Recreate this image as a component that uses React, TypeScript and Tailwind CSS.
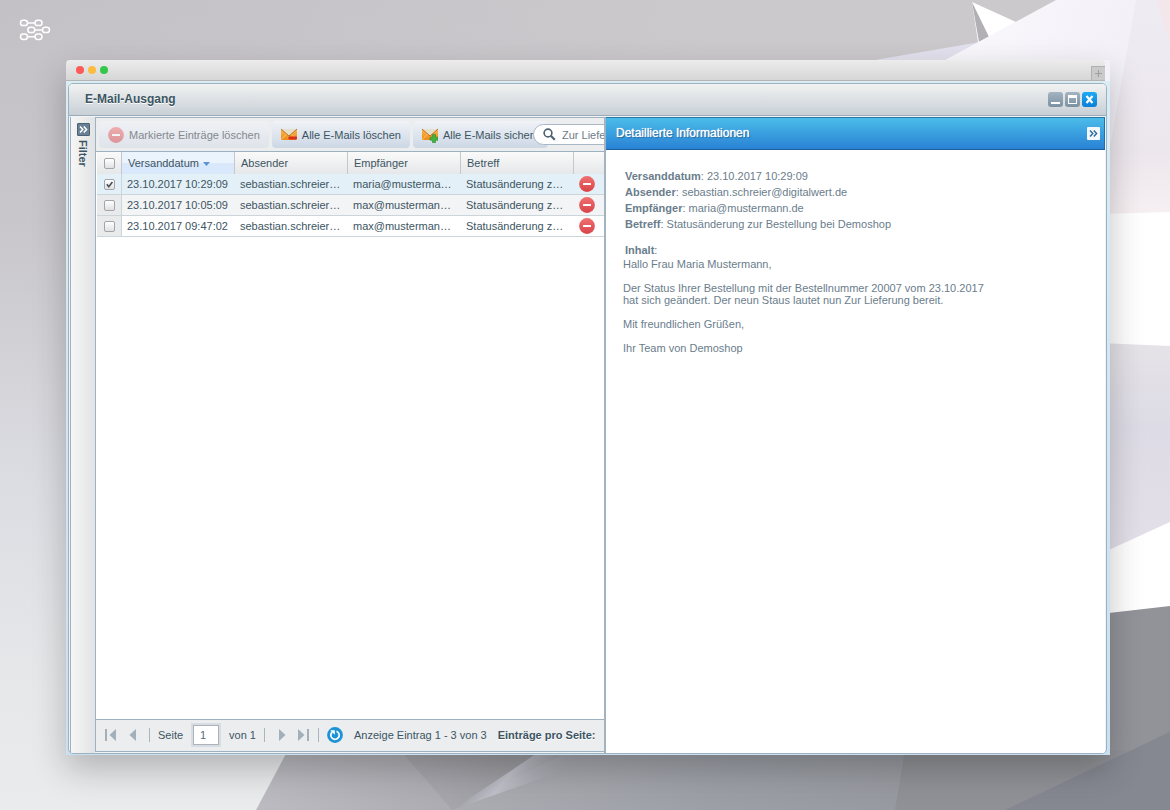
import React, { useState } from 'react';
import { clsx } from 'clsx';

interface Mail {
  id: number;
  date: string;
  sender: string;
  recipient: string;
  subject: string;
}

const MAILS: Mail[] = [
  { id: 1, date: '23.10.2017 10:29:09', sender: 'sebastian.schreier@digitalwert.de', recipient: 'maria@mustermann.de', subject: 'Statusänderung zur Bestellung bei Demoshop' },
  { id: 2, date: '23.10.2017 10:05:09', sender: 'sebastian.schreier@digitalwert.de', recipient: 'max@mustermann.de', subject: 'Statusänderung zur Bestellung bei Demoshop' },
  { id: 3, date: '23.10.2017 09:47:02', sender: 'sebastian.schreier@digitalwert.de', recipient: 'max@mustermann.de', subject: 'Statusänderung zur Bestellung bei Demoshop' },
];

// --- Icons ---
const Logo = () => (
  <svg width="32" height="22" viewBox="0 0 32 22" fill="none" stroke="#fff" strokeWidth="1.5">
    <rect x="1.5" y="1.2" width="7" height="5.4" rx="2.7" />
    <rect x="16" y="1.2" width="7" height="5.4" rx="2.7" />
    <rect x="8.8" y="8.2" width="7" height="5.4" rx="2.7" />
    <rect x="23.5" y="8.2" width="7" height="5.4" rx="2.7" />
    <rect x="1.5" y="15" width="7" height="5.4" rx="2.7" />
    <rect x="16" y="15" width="7" height="5.4" rx="2.7" />
    <path d="M8.5 4H16M15.8 11h7.7M8.5 17.7H16" />
  </svg>
);

const RemoveIcon = ({ faded = false }: { faded?: boolean }) => (
  <svg width="16" height="16" viewBox="0 0 16 16" opacity={faded ? 0.5 : 1}>
    <defs>
      <linearGradient id="removeFill" x1="0" y1="0" x2="0" y2="1">
        <stop offset="0" stopColor="#f07070" />
        <stop offset="1" stopColor="#d84348" />
      </linearGradient>
    </defs>
    <circle cx="8" cy="8" r="7.9" fill="url(#removeFill)" />
    <rect x="4" y="7" width="8" height="2" rx="0.5" fill="#fff" />
  </svg>
);

const EnvelopeIcon = ({ plus = false }: { plus?: boolean }) => (
  <svg width="16" height="16" viewBox="0 0 16 16">
    <defs>
      <linearGradient id="envelopeFill" x1="0" y1="0" x2="0" y2="1">
        <stop offset="0" stopColor="#f9b94c" />
        <stop offset="1" stopColor="#ef8a18" />
      </linearGradient>
    </defs>
    <rect x="0" y="2" width="16" height="11" fill="url(#envelopeFill)" />
    <path d="M0 2h16L8 9z" fill="#e6dfcc" />
    <path d="M0 2l8 7 8-7" fill="none" stroke="#b8661a" strokeWidth="0.9" />
    <path d="M0 13l5.5-6M16 13l-5.5-6" stroke="#fbcb78" strokeWidth="0.8" />
    {plus ? (
      <path d="M10.5 7.500h3v2.700H16v3h-2.500v2.500h-3v-2.500H8v-3h2.500z" fill="#43b13f" stroke="#2a8c2c" strokeWidth="0.600" />
    ) : (
      <rect x="7.500" y="9.500" width="8.500" height="3" rx="0.800" fill="#d6301f" />
    )}
  </svg>
);

const SearchIcon = () => (
  <svg width="13" height="13" viewBox="0 0 13 13" fill="none" stroke="#4f6373" className="shrink-0">
    <circle cx="5" cy="5" r="3.9" strokeWidth="1.6" />
    <path d="M7.8 7.8l4 4" strokeWidth="2.2" />
  </svg>
);

const Chevrons = () => (
  <svg width="9" height="9" viewBox="0 0 9 9" fill="none" stroke="currentColor" strokeWidth="1.5">
    <path d="M1 1.5l2.800 3L1 7.500M4.800 1.500l2.800 3-2.800 3" />
  </svg>
);

const RefreshIcon = () => (
  <svg width="16" height="16" viewBox="0 0 16 16">
    <circle cx="8" cy="8" r="7.9" fill="#1b93d6" />
    <path d="M9.5 4.200a4.200 4.200 0 1 1-4.300.8" fill="none" stroke="#fff" strokeWidth="1.700" />
    <path d="M3.200 3.300h4.600v4.400z" fill="#fff" />
  </svg>
);

const PageArrow = ({ end = false, flip = false }: { end?: boolean; flip?: boolean }) => (
  <svg width="12" height="12" viewBox="0 0 12 12" fill="#a3b0ba" className={clsx(flip && 'rotate-180')}>
    {end ? <path d="M0 0l6.500 6L0 12zM9 0h2v12H9z" /> : <path d="M3 0l6.500 6L3 12z" />}
  </svg>
);

const Wallpaper = () => (
  <svg className="absolute inset-0 h-full w-full" viewBox="0 0 1170 810" preserveAspectRatio="none" aria-hidden="true">
    <defs>
      <linearGradient id="wallLeft" x1="0" y1="0" x2="0" y2="1">
        <stop offset="0" stopColor="#c3c1c6" />
        <stop offset="0.270" stopColor="#c8c6cb" />
        <stop offset="0.600" stopColor="#dcdde2" />
        <stop offset="0.850" stopColor="#e7e8ea" />
        <stop offset="1" stopColor="#eaebed" />
      </linearGradient>
      <linearGradient id="wallTop" x1="0" y1="0" x2="1" y2="0">
        <stop offset="0" stopColor="#cbc9cc" stopOpacity="0" />
        <stop offset="0.600" stopColor="#cbc9cc" />
      </linearGradient>
      <linearGradient id="wallWhite" x1="0" y1="0" x2="1" y2="1">
        <stop offset="0" stopColor="#fcfbfe" />
        <stop offset="1" stopColor="#e8e5f0" />
      </linearGradient>
      <linearGradient id="wallPink" x1="0" y1="0" x2="0" y2="1">
        <stop offset="0" stopColor="#eeebf2" />
        <stop offset="0.650" stopColor="#ece7ed" />
        <stop offset="1" stopColor="#f9f2f4" />
      </linearGradient>
      <linearGradient id="wallLilac" x1="0" y1="0" x2="0" y2="1">
        <stop offset="0" stopColor="#e6e3e8" />
        <stop offset="0.400" stopColor="#dddbe5" />
        <stop offset="1" stopColor="#e4e0ea" />
      </linearGradient>
      <linearGradient id="wallGrey" gradientUnits="userSpaceOnUse" x1="256" y1="0" x2="1170" y2="0">
        <stop offset="0" stopColor="#bbbbc1" />
        <stop offset="0.180" stopColor="#aeaeb4" />
        <stop offset="0.500" stopColor="#9c9fa6" />
        <stop offset="0.930" stopColor="#929499" />
        <stop offset="1" stopColor="#919399" />
      </linearGradient>
      <linearGradient id="wallFold" gradientUnits="userSpaceOnUse" x1="430" y1="790" x2="500" y2="745">
        <stop offset="0" stopColor="#a6a6ac" />
        <stop offset="1" stopColor="#9b9ba0" />
      </linearGradient>
      <linearGradient id="wallRay" gradientUnits="userSpaceOnUse" x1="490" y1="765" x2="545" y2="810">
        <stop offset="0" stopColor="#a2a2a8" />
        <stop offset="0.300" stopColor="#c0c0ca" />
        <stop offset="1" stopColor="#9fa1a8" stopOpacity="0" />
      </linearGradient>
    </defs>
    <rect width="1170" height="810" fill="url(#wallLeft)" />
    <rect width="1170" height="70" fill="url(#wallTop)" />
    <path d="M875 60L980 42 1000 80H860z" fill="#e3e1ed" />
    <path d="M972 2l44 20-28 20h-10z" fill="#fff" />
    <path d="M972 2l17 35-10 5z" fill="#b2afb5" />
    <path d="M1056 0h114v810H1100V90H890z" fill="url(#wallWhite)" />
    <path d="M1136 0h34v230h-75z" fill="url(#wallPink)" />
    <path d="M1157 0h13v45z" fill="#f3e7eb" />
    <path d="M1100 214l70-2v420h-70z" fill="#fff" />
    <path d="M1100 343l70 3v176l-70 32z" fill="url(#wallLilac)" />
    <path d="M1100 614l70-8v204H256l32-60h812z" fill="url(#wallGrey)" />
    <path d="M400 750l52 60 120-60z" fill="url(#wallFold)" />
    <path d="M452 810l90-60h80z" fill="url(#wallRay)" />
    <path d="M905 750h230l35-20v80H895z" fill="#909196" />
    <path d="M1005 810l165-78v78z" fill="#858891" />
  </svg>
);

const Checkbox = (props: React.InputHTMLAttributes<HTMLInputElement>) => (
  <span className="relative mx-auto block h-[11px] w-[11px]">
    <input
      type="checkbox"
      className="block h-[11px] w-[11px] appearance-none rounded-[2px] border border-[#a2a6aa] bg-linear-to-b from-white to-[#dfe1e3]"
      {...props}
    />
    {props.checked && (
      <svg className="pointer-events-none absolute inset-0" width="11" height="11" viewBox="0 0 11 11" fill="none" stroke="#4a4f54" strokeWidth="1.6">
        <path d="M2.800 5.200l2 2.500 3.600-4.700" />
      </svg>
    )}
  </span>
);

const ToolbarButton = ({ icon, children, disabled }: { icon: React.ReactNode; children: React.ReactNode; disabled?: boolean }) => (
  <button
    type="button"
    disabled={disabled}
    className={clsx(
      'flex h-[27px] shrink-0 items-center gap-[5px] rounded-[4px] px-[9px]',
      disabled
        ? 'bg-linear-to-b from-[#eff1f4] to-[#dfe4eb] text-[#84898f]'
        : 'bg-linear-to-b from-[#f0f3f7] to-[#ccd7e5]',
    )}
  >
    {icon}
    {children}
  </button>
);

const Separator = () => <span className="h-[14px] w-px shrink-0 bg-[#a9b4bd]" />;

const thClass = 'h-[22px] truncate border-r border-[#c3c8cc] pl-[6px] text-left font-normal';

export default function App() {
  const [selected, setSelected] = useState<number[]>([1]);
  const [search, setSearch] = useState('Zur Lieferung');
  const [page, setPage] = useState('1');

  const toggle = (id: number) =>
    setSelected(prev => (prev.includes(id) ? prev.filter(x => x !== id) : [...prev, id]));

  const toggleAll = () => setSelected(selected.length === MAILS.length ? [] : MAILS.map(m => m.id));

  const mail = MAILS[0];

  return (
    <div className="relative flex min-h-screen flex-col overflow-hidden font-['Liberation_Sans',Arial,sans-serif] text-[11px] leading-[14px] text-[#3c5562]">
      <Wallpaper />

      <header className="relative flex h-[60px] items-center px-[19px]">
        <Logo />
      </header>

      <main className="relative mr-[60px] mb-[55px] ml-[66px] flex grow flex-col shadow-[0_14px_32px_rgba(0,0,0,0.24)]">
        {/* Browser bar */}
        <div className="mr-[5px] flex h-[21px] items-center gap-[4px] rounded-t-[4px] border-b border-[#b5b5b5] bg-linear-to-b from-[#ececec] to-[#d6d6d6] pl-[10px]">
          <span className="h-2 w-2 rounded-full bg-[#fc5b57]" />
          <span className="h-2 w-2 rounded-full bg-[#fdbc40]" />
          <span className="h-2 w-2 rounded-full bg-[#34c84a]" />
          <button type="button" aria-label="Neuer Tab" className="ml-auto flex h-[14px] w-[14px] items-center justify-center self-end border-t border-l border-[#b0b0b0] bg-[#cacaca]">
            <svg width="7" height="7" viewBox="0 0 7 7" stroke="#a0a0a0" strokeWidth="1.200">
              <path d="M3.500 0v7M0 3.500h7" />
            </svg>
          </button>
        </div>

        {/* Application window */}
        <div className="flex grow flex-col bg-linear-to-b from-[#daedf4] to-[#c9e0f1] pt-[2px] pr-[3px] pb-px pl-[2px]">
          <div className="flex grow flex-col overflow-hidden rounded-[5px] border border-[#9db1c0] bg-[#f1f3f5]">
            <div className="flex h-[32px] items-center gap-[2px] border-b border-[#9aabba] bg-linear-to-b from-[#f1f2f2] to-[#c8d0d6] pr-[9px] pb-px pl-4">
              <h1 className="grow text-[12px] leading-[16px] font-bold [text-shadow:0_1px_0_#fff]">E-Mail-Ausgang</h1>
              <button type="button" aria-label="Minimieren" className="h-[15px] w-[15px] rounded-[3px] bg-linear-to-b from-[#a4b4c0] to-[#7b92a1]">
                <svg width="15" height="15" viewBox="0 0 15 15"><path d="M3 10h9v2H3z" fill="#fff" /></svg>
              </button>
              <button type="button" aria-label="Maximieren" className="h-[15px] w-[15px] rounded-[3px] bg-linear-to-b from-[#a4b4c0] to-[#7b92a1]">
                <svg width="15" height="15" viewBox="0 0 15 15"><path d="M3 3h9v9H3zM4 6v5h7V6z" fill="#fff" fillRule="evenodd" /></svg>
              </button>
              <button type="button" aria-label="Schließen" className="h-[15px] w-[15px] rounded-[3px] bg-linear-to-b from-[#1faaf5] to-[#0b7fd6]">
                <svg width="15" height="15" viewBox="0 0 15 15"><path d="M4.500 4l6 7M10.500 4l-6 7" stroke="#fff" strokeWidth="2.200" /></svg>
              </button>
            </div>

            <div className="flex grow pt-px pr-px pl-px">
              {/* Collapsed filter strip */}
              <aside className="flex w-[25px] shrink-0 flex-col items-center gap-[4px] border-l border-[#9db1c0] bg-linear-to-r from-[#f6f6f6] to-[#e2e3e4] pt-[6px]">
                <button type="button" aria-label="Filter öffnen" className="flex h-[13px] w-[13px] items-center justify-center rounded-[1px] border border-[#4b6275] bg-[#6a8195] text-white">
                  <Chevrons />
                </button>
                <span className="font-bold [writing-mode:vertical-rl]">Filter</span>
              </aside>

              {/* Mail list */}
              <section className="mb-px flex w-[509px] shrink-0 flex-col overflow-hidden border-t border-b border-l border-[#9db1c0] bg-white">
                <div className="relative flex h-[34px] items-center gap-[3px] border-b border-[#9db1c0] bg-[#ebedef] pl-[3px]">
                  <ToolbarButton disabled icon={<RemoveIcon faded />}>Markierte Einträge löschen</ToolbarButton>
                  <ToolbarButton icon={<EnvelopeIcon />}>Alle E-Mails löschen</ToolbarButton>
                  <ToolbarButton icon={<EnvelopeIcon plus />}>Alle E-Mails sichern</ToolbarButton>
                  <label className="absolute top-[6px] left-[437px] flex h-[21px] w-[180px] items-center gap-[6px] rounded-full border border-[#a9b8c4] bg-white pl-[9px]">
                    <SearchIcon />
                    <input
                      aria-label="Suche"
                      className="w-full bg-transparent text-[#6b7d8c] outline-none"
                      value={search}
                      onChange={e => setSearch(e.target.value)}
                    />
                  </label>
                </div>

                <div className="pl-px">
                  <table className="w-full table-fixed border-separate border-spacing-0">
                    <colgroup>
                      <col className="w-[25px]" />
                      <col className="w-[113px]" />
                      <col className="w-[113px]" />
                      <col className="w-[113px]" />
                      <col className="w-[113px]" />
                      <col />
                    </colgroup>
                    <thead>
                      <tr className="bg-linear-to-b from-[#fafafa] to-[#e6e7e9]">
                        <th className="border-r border-[#c3c8cc] pt-px">
                          <Checkbox aria-label="Alle auswählen" checked={selected.length === MAILS.length} onChange={toggleAll} />
                        </th>
                        <th className={clsx(thClass, 'bg-linear-to-b from-[#ebf3fd] from-50% to-[#d9e8fb] to-50%')}>
                          Versanddatum
                          <svg className="ml-1 inline-block" width="7" height="4" viewBox="0 0 7 4"><path d="M0 0h7L3.500 4z" fill="#5b93d4" /></svg>
                        </th>
                        <th className={thClass}>Absender</th>
                        <th className={thClass}>Empfänger</th>
                        <th className={thClass}>Betreff</th>
                        <th />
                      </tr>
                    </thead>
                    <tbody>
                      {MAILS.map((m, idx) => (
                        <tr
                          key={m.id}
                          className={clsx(
                            '[&>td]:h-[21px] [&>td]:border-b [&>td]:border-[#cdd5db]',
                            idx === 0 && 'bg-[#e4f0f7]',
                            idx === 1 && 'bg-[#f3f4f6]',
                          )}
                        >
                          <td className={clsx('border-r border-r-[#dde1e5] pt-px', idx > 0 && 'bg-[#e8eaec]')}>
                            <Checkbox aria-label={`E-Mail ${m.date}`} checked={selected.includes(m.id)} onChange={() => toggle(m.id)} />
                          </td>
                          <td className="truncate pl-[5px]">{m.date}</td>
                          <td className="truncate px-[5px]">{m.sender}</td>
                          <td className="truncate px-[5px]">{m.recipient}</td>
                          <td className="truncate px-[5px]">{m.subject}</td>
                          <td>
                            <button type="button" aria-label="Löschen" className="ml-[5px] block"><RemoveIcon /></button>
                          </td>
                        </tr>
                      ))}
                    </tbody>
                  </table>
                </div>

                {/* Paging */}
                <div className="mt-auto flex h-[32px] items-center gap-2 border-t border-[#9db1c0] bg-[#ebedef] pb-px pl-2 whitespace-nowrap">
                  <button type="button" aria-label="Erste Seite" className="w-3 shrink-0"><PageArrow end flip /></button>
                  <button type="button" aria-label="Vorherige Seite" className="flex w-[17px] shrink-0 justify-center"><PageArrow flip /></button>
                  <Separator />
                  <label htmlFor="page">Seite</label>
                  <input
                    id="page"
                    className="mx-[2px] h-[20px] w-[26px] shrink-0 border border-[#a9b4bd] bg-white pl-[6px] text-[#5b6c78] shadow-[0_0_0_2px_#d8dde3] outline-none"
                    value={page}
                    onChange={e => setPage(e.target.value)}
                  />
                  <span>von 1</span>
                  <Separator />
                  <button type="button" aria-label="Nächste Seite" className="flex w-[17px] shrink-0 justify-center"><PageArrow /></button>
                  <button type="button" aria-label="Letzte Seite" className="w-3 shrink-0"><PageArrow end /></button>
                  <Separator />
                  <button type="button" aria-label="Aktualisieren" className="shrink-0"><RefreshIcon /></button>
                  <span className="px-[3px]">Anzeige Eintrag 1 - 3 von 3</span>
                  <span className="font-bold [text-shadow:0_1px_0_#fff]">Einträge pro Seite:</span>
                </div>
              </section>

              {/* Detail panel */}
              <section className="flex grow flex-col border-l-2 border-[#a3b3c0] bg-white text-[#6a7d8c]">
                <div className="flex h-[33px] items-center justify-between border-t border-r border-b border-t-[#2777ab] border-r-[#1f6fae] border-b-[#1c5f9e] bg-linear-to-b from-[#4bbce9] to-[#2a82d4] pr-[4px] pb-px pl-[10px]">
                  <h2 className="text-[12px] leading-[16px] text-white [text-shadow:0_0_1px_#fff,1px_1px_1px_#1b5c8e]">Detaillierte Informationen</h2>
                  <button type="button" aria-label="Einklappen" className="flex h-[13px] w-[13px] items-center justify-center rounded-[1px] bg-[#f4f8fb] text-[#2f6fa0]">
                    <Chevrons />
                  </button>
                </div>
                <div className="px-[17px] pt-[18px]">
                  <div className="px-[2px] leading-[16px]">
                    <p><b>Versanddatum</b>: {mail.date}</p>
                    <p><b>Absender</b>: {mail.sender}</p>
                    <p><b>Empfänger</b>: {mail.recipient}</p>
                    <p><b>Betreff</b>: {mail.subject}</p>
                    <p className="mt-[10px]"><b>Inhalt</b>:</p>
                  </div>
                  <div className="max-w-[380px] space-y-3 leading-[12px]">
                    <p>Hallo Frau Maria Mustermann,</p>
                    <p>
                      Der Status Ihrer Bestellung mit der Bestellnummer 20007 vom 23.10.2017
                      <br />
                      hat sich geändert. Der neun Staus lautet nun Zur Lieferung bereit.
                    </p>
                    <p>Mit freundlichen Grüßen,</p>
                    <p>Ihr Team von Demoshop</p>
                  </div>
                </div>
              </section>
            </div>
          </div>
        </div>
      </main>
    </div>
  );
}
